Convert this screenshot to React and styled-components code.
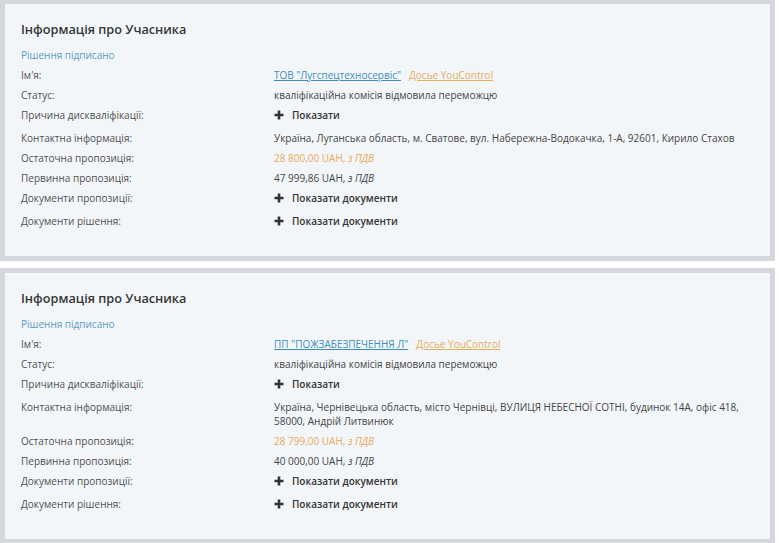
import React from "react";
import styled, { createGlobalStyle } from "styled-components";

const GlobalStyle = createGlobalStyle`
  html, body {
    margin: 0;
    padding: 0;
    background: #ffffff;
  }
  body {
    font-family: "Open Sans", "Noto Sans", Arial, sans-serif;
    -webkit-font-smoothing: antialiased;
  }
`;

const Page = styled.div`
  width: 775px;
  display: flex;
  flex-direction: column;
  gap: 7px;
`;

const Card = styled.section`
  background: #f3f6f9;
  border: 5px solid #d4d8dc;
  border-top-width: ${(p) => (p.$first ? 4 : 5)}px;
  padding: 15px 16px 22px;
  color: #444;
`;

const Title = styled.h2`
  margin: 0 0 6px;
  font-size: 12.7px;
  line-height: 20px;
  font-weight: 600;
  color: #363636;
`;

const Row = styled.div`
  display: grid;
  grid-template-columns: 253px 1fr;
  padding: 3px 0 ${(p) => (p.$tall ? 5 : 3)}px;
  font-size: 10px;
  line-height: 14px;
`;

const Label = styled.div`
  color: #505050;
`;

const Value = styled.div`
  color: ${(p) => p.$color || "#444"};
  max-width: 470px;
`;

const Status = styled.div`
  padding: 3px 0;
  font-size: 10px;
  line-height: 14px;
  color: #5a9cc5;
`;

const NameLink = styled.a`
  color: #3d8ec0;
  text-decoration: underline;
  margin-right: 8px;
`;

const DossierLink = styled.a`
  color: #e6ad5c;
  text-decoration: underline;
`;

const Vat = styled.i`
  font-style: italic;
`;

const Toggle = styled.span`
  display: inline-flex;
  align-items: center;
  gap: 8px;
  font-weight: 600;
  color: #333;
`;

const PlusIcon = () => (
  <svg width="10" height="10" viewBox="0 0 10 10" aria-hidden="true">
    <path d="M5 0.5v9M0.5 5h9" stroke="#333" strokeWidth="2.6" />
  </svg>
);

const participants = [
  {
    name: 'ТОВ "Лугспецтехносервіс"',
    address:
      "Україна, Луганська область, м. Сватове, вул. Набережна-Водокачка, 1-А, 92601, Кирило Стахов",
    final: "28 800,00",
    initial: "47 999,86",
  },
  {
    name: 'ПП "ПОЖЗАБЕЗПЕЧЕННЯ Л"',
    address:
      "Україна, Чернівецька область, місто Чернівці, ВУЛИЦЯ НЕБЕСНОЇ СОТНІ, будинок 14А, офіс 418, 58000, Андрій Литвинюк",
    final: "28 799,00",
    initial: "40 000,00",
  },
];

const ParticipantCard = ({ data, first }) => (
  <Card $first={first}>
    <Title>Інформація про Учасника</Title>
    <Status>Рішення підписано</Status>
    <Row>
      <Label>Ім'я:</Label>
      <Value>
        <NameLink href="#">{data.name}</NameLink>
        <DossierLink href="#">Досье YouControl</DossierLink>
      </Value>
    </Row>
    <Row>
      <Label>Статус:</Label>
      <Value>кваліфікаційна комісія відмовила переможцю</Value>
    </Row>
    <Row $tall>
      <Label>Причина дискваліфікації:</Label>
      <Value>
        <Toggle>
          <PlusIcon />
          Показати
        </Toggle>
      </Value>
    </Row>
    <Row>
      <Label>Контактна інформація:</Label>
      <Value>{data.address}</Value>
    </Row>
    <Row>
      <Label>Остаточна пропозиція:</Label>
      <Value $color="#e8a95a">
        {data.final} UAH, <Vat>з ПДВ</Vat>
      </Value>
    </Row>
    <Row>
      <Label>Первинна пропозиція:</Label>
      <Value>
        {data.initial} UAH, <Vat>з ПДВ</Vat>
      </Value>
    </Row>
    <Row $tall>
      <Label>Документи пропозиції:</Label>
      <Value>
        <Toggle>
          <PlusIcon />
          Показати документи
        </Toggle>
      </Value>
    </Row>
    <Row $tall>
      <Label>Документи рішення:</Label>
      <Value>
        <Toggle>
          <PlusIcon />
          Показати документи
        </Toggle>
      </Value>
    </Row>
  </Card>
);

export default function App() {
  return (
    <>
      <GlobalStyle />
      <Page>
        {participants.map((p, i) => (
          <ParticipantCard key={p.name} data={p} first={i === 0} />
        ))}
      </Page>
    </>
  );
}
